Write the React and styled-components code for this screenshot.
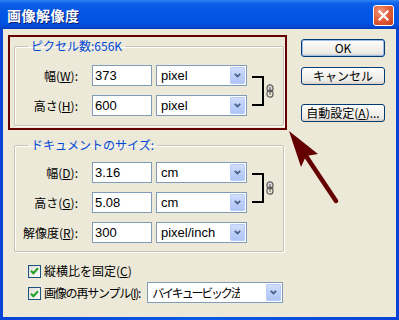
import React from 'react';
import styled, { createGlobalStyle } from 'styled-components';

const GlobalStyle = createGlobalStyle`
  html, body {
    margin: 0;
    padding: 0;
    background: #ece9d8;
  }
`;

const Window = styled.div`
  position: relative;
  width: 399px;
  height: 320px;
  box-sizing: border-box;
  display: flex;
  flex-direction: column;
  background: linear-gradient(90deg, #0842d6, #0a5ae8 50%, #0842d6);
  font-family: "Noto Sans CJK JP", "Liberation Sans", sans-serif;
  font-size: 12px;
  color: #000;
  overflow: hidden;
`;

const TitleBar = styled.div`
  height: 29px;
  flex: none;
  display: flex;
  align-items: center;
  justify-content: space-between;
  padding: 0 5px 0 7px;
  background: linear-gradient(180deg, #2d83f4 0%, #0d5fe6 12%, #0456e4 45%, #0253e2 80%, #0148d2 92%, #003bbf 100%);
`;

const Title = styled.span`
  color: #fff;
  font-weight: bold;
  font-size: 14px;
  line-height: 16px;
  letter-spacing: 0.5px;
  text-shadow: 1px 1px 0 #0a1e6e;
  margin-top: 1px;
`;

const CloseButton = styled.div`
  width: 21px;
  height: 21px;
  box-sizing: border-box;
  border: 1px solid #fff;
  border-radius: 3px;
  background: radial-gradient(circle at 35% 30%, #f19a7e 0%, #e3613c 45%, #c7391a 100%);
  display: flex;
  align-items: center;
  justify-content: center;
  margin-top: 2px;
`;

const Body = styled.div`
  flex: 1;
  margin: 0 3px 3px;
  background: #ece9d8;
  display: flex;
  align-items: flex-start;
`;

const LeftColumn = styled.div`
  margin-left: 11px;
  width: 270px;
  display: flex;
  flex-direction: column;
`;

const Group = styled.fieldset`
  margin: ${(p) => p.$mt}px 0 0;
  padding: ${(p) => p.$pt}px 0 ${(p) => p.$pb}px;
  border: 1px solid #c6c3b4;
  box-shadow: inset 1px 1px 0 #fff, 1px 1px 0 #fff;
  border-radius: 2px;
  min-width: 0;
`;

const Legend = styled.legend`
  margin-left: 13px;
  padding: 0 3px;
  font-size: 12px;
  line-height: 14px;
  color: #0046d5;
`;

const FieldGrid = styled.div`
  display: grid;
  grid-template-columns: 73px 60px 91px auto;
  grid-auto-rows: 21px;
  column-gap: 4px;
  row-gap: 9px;
  align-items: center;
`;

const Label = styled.label`
  text-align: right;
  padding-right: 10px;
  line-height: 14px;
  white-space: nowrap;
`;

const TextBox = styled.div`
  height: 21px;
  box-sizing: border-box;
  border: 1px solid #7f9db9;
  background: #fff;
  padding: 0 2px;
  font-family: "Liberation Sans", Arial, sans-serif;
  font-size: 13px;
  line-height: 19px;
`;

const Select = styled.div`
  height: 21px;
  width: ${(p) => p.$w || 91}px;
  flex: none;
  box-sizing: border-box;
  border: 1px solid #7f9db9;
  background: #fff;
  display: flex;
  align-items: center;
  justify-content: space-between;
  padding: 1px;
`;

const SelectText = styled.span`
  padding-left: 3px;
  font-family: ${(p) => (p.$jp ? '"Noto Sans CJK JP", sans-serif' : '"Liberation Sans", Arial, sans-serif')};
  font-size: ${(p) => (p.$jp ? 12 : 13)}px;
  letter-spacing: ${(p) => (p.$jp ? '-2.2px' : 'normal')};
  line-height: 17px;
  white-space: nowrap;
  overflow: hidden;
`;

const DropButton = styled.div`
  width: 15px;
  height: 17px;
  flex: none;
  box-sizing: border-box;
  border: 1px solid #b9ccf7;
  border-radius: 1px;
  background: linear-gradient(180deg, #d2defc 0%, #bcd0fb 50%, #aec4f6 100%);
  display: flex;
  align-items: center;
  justify-content: center;
`;

const LinkCell = styled.div`
  grid-column: 4;
  grid-row: 1 / span 2;
  align-self: center;
  display: flex;
  align-items: center;
  gap: 2px;
  margin-left: 1px;
`;

const Bracket = styled.div`
  width: 10px;
  height: 26px;
  border: 2px solid #000;
  border-left: none;
`;

const CheckRow = styled.div`
  display: flex;
  align-items: center;
  height: ${(p) => p.$h}px;
  margin-top: ${(p) => p.$mt}px;
  margin-left: 14px;
  gap: 3px;
`;

const CheckBox = styled.div`
  width: 13px;
  height: 13px;
  box-sizing: border-box;
  border: 1px solid #1c5180;
  background: linear-gradient(135deg, #dcdcd7 0%, #fff 100%);
  display: flex;
  align-items: center;
  justify-content: center;
  flex: none;
  margin-top: ${(p) => p.$dy || 0}px;
`;

const CheckLabel = styled.span`
  line-height: 14px;
  white-space: nowrap;
  letter-spacing: ${(p) => p.$ls || 0}px;
  margin-right: ${(p) => p.$mr || 0}px;
`;

const ButtonColumn = styled.div`
  margin-left: 17px;
  padding-top: 10px;
  display: flex;
  flex-direction: column;
`;

const Button = styled.div`
  width: 84px;
  height: 18px;
  box-sizing: border-box;
  margin-top: ${(p) => p.$mt || 0}px;
  border: 1px solid #003c74;
  border-radius: 3px;
  background: linear-gradient(180deg, #fff 0%, #f4f3ee 40%, #ecebe6 80%, #d6d0c5 100%);
  box-shadow: ${(p) => (p.$default ? 'inset 0 0 0 1px #9fbbea' : 'none')};
  display: flex;
  align-items: center;
  justify-content: center;
  font-size: 12px;
  line-height: 14px;
  white-space: nowrap;
`;

const Overlay = styled.svg`
  position: absolute;
  left: 0;
  top: 0;
  pointer-events: none;
`;

const Chevron = () => (
  <svg width="7" height="5" viewBox="0 0 7 5">
    <polyline points="0.8,0.8 3.5,3.5 6.2,0.8" fill="none" stroke="#4d6185" strokeWidth="1.8" />
  </svg>
);

const Combo = ({ children, w, jp }) => (
  <Select $w={w}>
    <SelectText $jp={jp}>{children}</SelectText>
    <DropButton>
      <Chevron />
    </DropButton>
  </Select>
);

const Chain = () => (
  <svg width="8" height="14" viewBox="0 0 8 14">
    <rect x="1" y="0.8" width="6" height="7" rx="3" fill="#d8d8d8" stroke="#5a5a5a" strokeWidth="1.2" />
    <rect x="1" y="6.2" width="6" height="7" rx="3" fill="none" stroke="#5a5a5a" strokeWidth="1.2" />
    <line x1="4" y1="3" x2="4" y2="11" stroke="#5a5a5a" strokeWidth="1" />
  </svg>
);

const Check = () => (
  <svg width="9" height="8" viewBox="0 0 9 8">
    <polyline points="1,3.8 3.4,6.2 8,1.2" fill="none" stroke="#21a121" strokeWidth="2" />
  </svg>
);

const LinkMark = () => (
  <LinkCell>
    <Bracket />
    <Chain />
  </LinkCell>
);

export default function App() {
  return (
    <>
      <GlobalStyle />
      <Window>
        <TitleBar>
          <Title>画像解像度</Title>
          <CloseButton>
            <svg width="11" height="11" viewBox="0 0 11 11">
              <path d="M1.5 1.5 L9.5 9.5 M9.5 1.5 L1.5 9.5" stroke="#fff" strokeWidth="2.2" strokeLinecap="square" />
            </svg>
          </CloseButton>
        </TitleBar>
        <Body>
          <LeftColumn>
            <Group $mt={10} $pt={12} $pb={9}>
              <Legend>ピクセル数:656K</Legend>
              <FieldGrid>
                <Label>幅(<u>W</u>):</Label>
                <TextBox>373</TextBox>
                <Combo>pixel</Combo>
                <LinkMark />
                <Label>高さ(<u>H</u>):</Label>
                <TextBox>600</TextBox>
                <Combo>pixel</Combo>
              </FieldGrid>
            </Group>
            <Group $mt={12} $pt={10} $pb={8}>
              <Legend>ドキュメントのサイズ:</Legend>
              <FieldGrid>
                <Label>幅(<u>D</u>):</Label>
                <TextBox>3.16</TextBox>
                <Combo>cm</Combo>
                <LinkMark />
                <Label>高さ(<u>G</u>):</Label>
                <TextBox>5.08</TextBox>
                <Combo>cm</Combo>
                <Label>解像度(<u>R</u>):</Label>
                <TextBox>300</TextBox>
                <Combo>pixel/inch</Combo>
              </FieldGrid>
            </Group>
            <CheckRow $h={20} $mt={9}>
              <CheckBox>
                <Check />
              </CheckBox>
              <CheckLabel>縦横比を固定(<u>C</u>)</CheckLabel>
            </CheckRow>
            <CheckRow $h={21} $mt={1}>
              <CheckBox $dy={2}>
                <Check />
              </CheckBox>
              <CheckLabel $ls={-1.2} $mr={4}>画像の再サンプル(<u>I</u>):</CheckLabel>
              <Combo w={136} jp>バイキュービック法</Combo>
            </CheckRow>
          </LeftColumn>
          <ButtonColumn>
            <Button $default>OK</Button>
            <Button $mt={10}>キャンセル</Button>
            <Button $mt={19}>自動設定(<u>A</u>)...</Button>
          </ButtonColumn>
        </Body>
        <Overlay width="399" height="320" viewBox="0 0 399 320">
          <rect x="9" y="36" width="277" height="93" fill="none" stroke="#650000" strokeWidth="2" />
          <path d="M336 201 L306 156" stroke="#650000" strokeWidth="4.5" strokeLinecap="round" />
          <polygon points="289,131 318,154 306,156 301,167" fill="#650000" />
        </Overlay>
      </Window>
    </>
  );
}
